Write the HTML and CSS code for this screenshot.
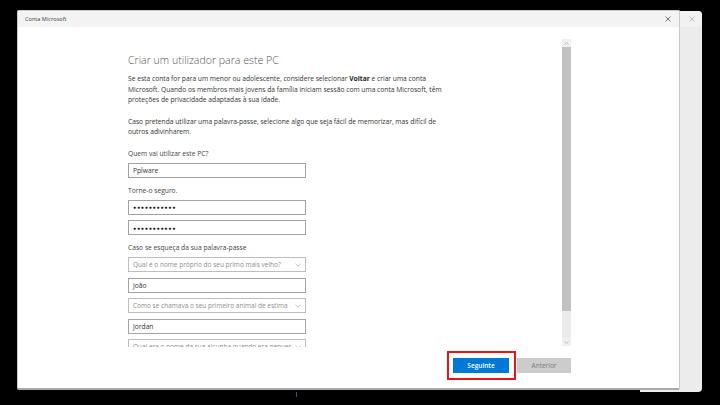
FILE: index.html
```html
<!DOCTYPE html>
<html lang="pt">

<head>
  <meta charset='utf-8'>
  <title>Conta Microsoft</title>
  <link rel="stylesheet" href="styles.css">
</head>

<body>
  <div class='desktop'>
    <!-- janela por trás -->
    <div class='win win-back'>
      <div class='titlebar'>
        <span class='title'></span>
        <svg class='close' width='6' height='6' viewBox='0 0 6 6'><path d='M0.5 0.5L5.5 5.5M5.5 0.5L0.5 5.5' stroke='#b4b4b4' stroke-width='0.8'/></svg>
      </div>
    </div>

    <!-- janela principal -->
    <div class='win win-front'>
      <div class='titlebar'>
        <span class='title'>Conta Microsoft</span>
        <svg class='close' width='6' height='6' viewBox='0 0 6 6'><path d='M0.5 0.5L5.5 5.5M5.5 0.5L0.5 5.5' stroke='#555' stroke-width='0.8'/></svg>
      </div>

      <div class='winbody'>
        <div class='scroller'>
          <div class='content'>
            <h1>Criar um utilizador para este PC</h1>
            <p>Se esta conta for para um menor ou adolescente, considere selecionar <b>Voltar</b> e criar uma conta Microsoft. Quando os membros mais jovens da família iniciam sessão com uma conta Microsoft, têm proteções de privacidade adaptadas à sua idade.</p>
            <p>Caso pretenda utilizar uma palavra-passe, selecione algo que seja fácil de memorizar, mas difícil de outros adivinharem.</p>

            <label class='lbl'>Quem vai utilizar este PC?</label>
            <div class='field'>Pplware</div>

            <label class='lbl'>Torne-o seguro.</label>
            <div class='field dots'>●●●●●●●●●●●</div>
            <div class='field dots'>●●●●●●●●●●●</div>

            <label class='lbl'>Caso se esqueça da sua palavra-passe</label>
            <div class='field select'>
              <span>Qual é o nome próprio do seu primo mais velho?</span>
              <svg width='6' height='4' viewBox='0 0 6 4'><path d='M0.5 0.8L3 3.2L5.5 0.8' fill='none' stroke='#999' stroke-width='0.7'/></svg>
            </div>
            <div class='field'>João</div>
            <div class='field select'>
              <span>Como se chamava o seu primeiro animal de estima</span>
              <svg width='6' height='4' viewBox='0 0 6 4'><path d='M0.5 0.8L3 3.2L5.5 0.8' fill='none' stroke='#999' stroke-width='0.7'/></svg>
            </div>
            <div class='field'>Jordan</div>
            <div class='field select'>
              <span>Qual era o nome da sua alcunha quando era pequeno?</span>
              <svg width='6' height='4' viewBox='0 0 6 4'><path d='M0.5 0.8L3 3.2L5.5 0.8' fill='none' stroke='#999' stroke-width='0.7'/></svg>
            </div>
          </div>

          <div class='scrollbar'>
            <div class='sb-arrow'><svg width='5' height='3' viewBox='0 0 5 3'><path d='M0.5 2.5L2.5 0.5L4.5 2.5' fill='none' stroke='#999' stroke-width='0.6'/></svg></div>
            <div class='sb-thumb'></div>
            <div class='sb-track'></div>
            <div class='sb-arrow'><svg width='5' height='3' viewBox='0 0 5 3'><path d='M0.5 0.5L2.5 2.5L4.5 0.5' fill='none' stroke='#999' stroke-width='0.6'/></svg></div>
          </div>
        </div>

        <div class='footer'>
          <div class='mark'>
            <button class='btn btn-primary'>Seguinte</button>
          </div>
          <button class='btn btn-grey'>Anterior</button>
        </div>
      </div>
    </div>

    <div class='taskdot'></div>
  </div>
</body>

</html>
```

FILE: styles.css
```css
* {
  margin: 0;
  padding: 0;
  box-sizing: border-box;
}

body {
  background: #000;
  overflow: hidden;
  font-family: "Segoe UI", "Open Sans", "Noto Sans", sans-serif;
}

.desktop {
  position: relative;
  width: 720px;
  height: 405px;
}

.win {
  position: absolute;
  display: flex;
  flex-direction: column;
}

.win-back {
  left: 640px;
  top: 11px;
  width: 62px;
  height: 381px;
  background: #ececec;
  border-radius: 0 4px 4px 0;
}

.win-back .titlebar {
  background: #f1f1f1;
  border-radius: 0 4px 0 0;
  padding-right: 7px;
}

.win-front {
  left: 17px;
  top: 10px;
  width: 663px;
  height: 380px;
  background: #fff;
  border: 1px solid #c9c9c9;
  border-bottom: 2px solid #a9a9a9;
  border-radius: 2px;
}

.titlebar {
  height: 16px;
  flex: none;
  display: flex;
  align-items: center;
  justify-content: space-between;
  padding: 0 8px 0 7px;
  background: #f3f3f3;
}

.title {
  font-size: 5.6px;
  color: #3a3a3a;
}

.winbody {
  flex: 1;
  display: flex;
  flex-direction: column;
  min-height: 0;
}

.scroller {
  height: 320px;
  display: flex;
  overflow: hidden;
}

.content {
  flex: 1;
  padding: 24px 0 0 110px;
  color: #333;
}

h1 {
  font-size: 10.6px;
  font-weight: 300;
  line-height: 18px;
  color: #555;
  margin-bottom: 5px;
}

p {
  width: 318px;
  font-size: 6.7px;
  line-height: 10.5px;
  color: #333;
  margin-bottom: 11px;
}

p b {
  font-weight: 700;
  color: #222;
}

.lbl {
  display: block;
  font-size: 6.7px;
  line-height: 10px;
  color: #444;
  margin-top: 8px;
  margin-bottom: 4px;
}

p + .lbl {
  margin-top: 11px;
}

.field {
  width: 178px;
  height: 15px;
  border: 1px solid #a3a3a3;
  padding: 0 4px;
  display: flex;
  align-items: center;
  font-size: 6.7px;
  color: #333;
}

.field + .field {
  margin-top: 5.5px;
}

.dots {
  font-size: 5px;
  letter-spacing: 0.9px;
  color: #111;
}

.select {
  border-color: #bdbdbd;
  justify-content: space-between;
  gap: 4px;
  color: #8d8d8d;
  font-size: 6.5px;
}

.select span {
  white-space: nowrap;
  overflow: hidden;
}

.select svg {
  flex: none;
}

.scrollbar {
  flex: none;
  width: 9px;
  margin: 12px 108px 0 0;
  height: 307px;
  display: flex;
  flex-direction: column;
  background: #f0f0f0;
}

.sb-arrow {
  height: 8px;
  display: flex;
  align-items: center;
  justify-content: center;
}

.sb-thumb {
  height: 264px;
  background: #c2c2c2;
}

.sb-track {
  flex: 1;
  background: #ebebeb;
}

.footer {
  flex: 1;
  display: flex;
  justify-content: flex-end;
  align-items: center;
  padding: 0 108px 4px 0;
}

.mark {
  display: flex;
  border: 2px solid #e8141b;
  padding: 5px 5px 5px 4px;
  margin-right: 1px;
}

.btn {
  height: 15px;
  border: none;
  font-family: inherit;
  font-size: 6.5px;
}

.btn-primary {
  width: 56px;
  background: #0078d7;
  color: #fff;
  font-weight: 600;
}

.btn-grey {
  width: 54px;
  background: #cccccc;
  color: #7a7a7a;
}

.taskdot {
  position: absolute;
  left: 296px;
  top: 392px;
  width: 1px;
  height: 5px;
  background: #1f5f99;
}
```
